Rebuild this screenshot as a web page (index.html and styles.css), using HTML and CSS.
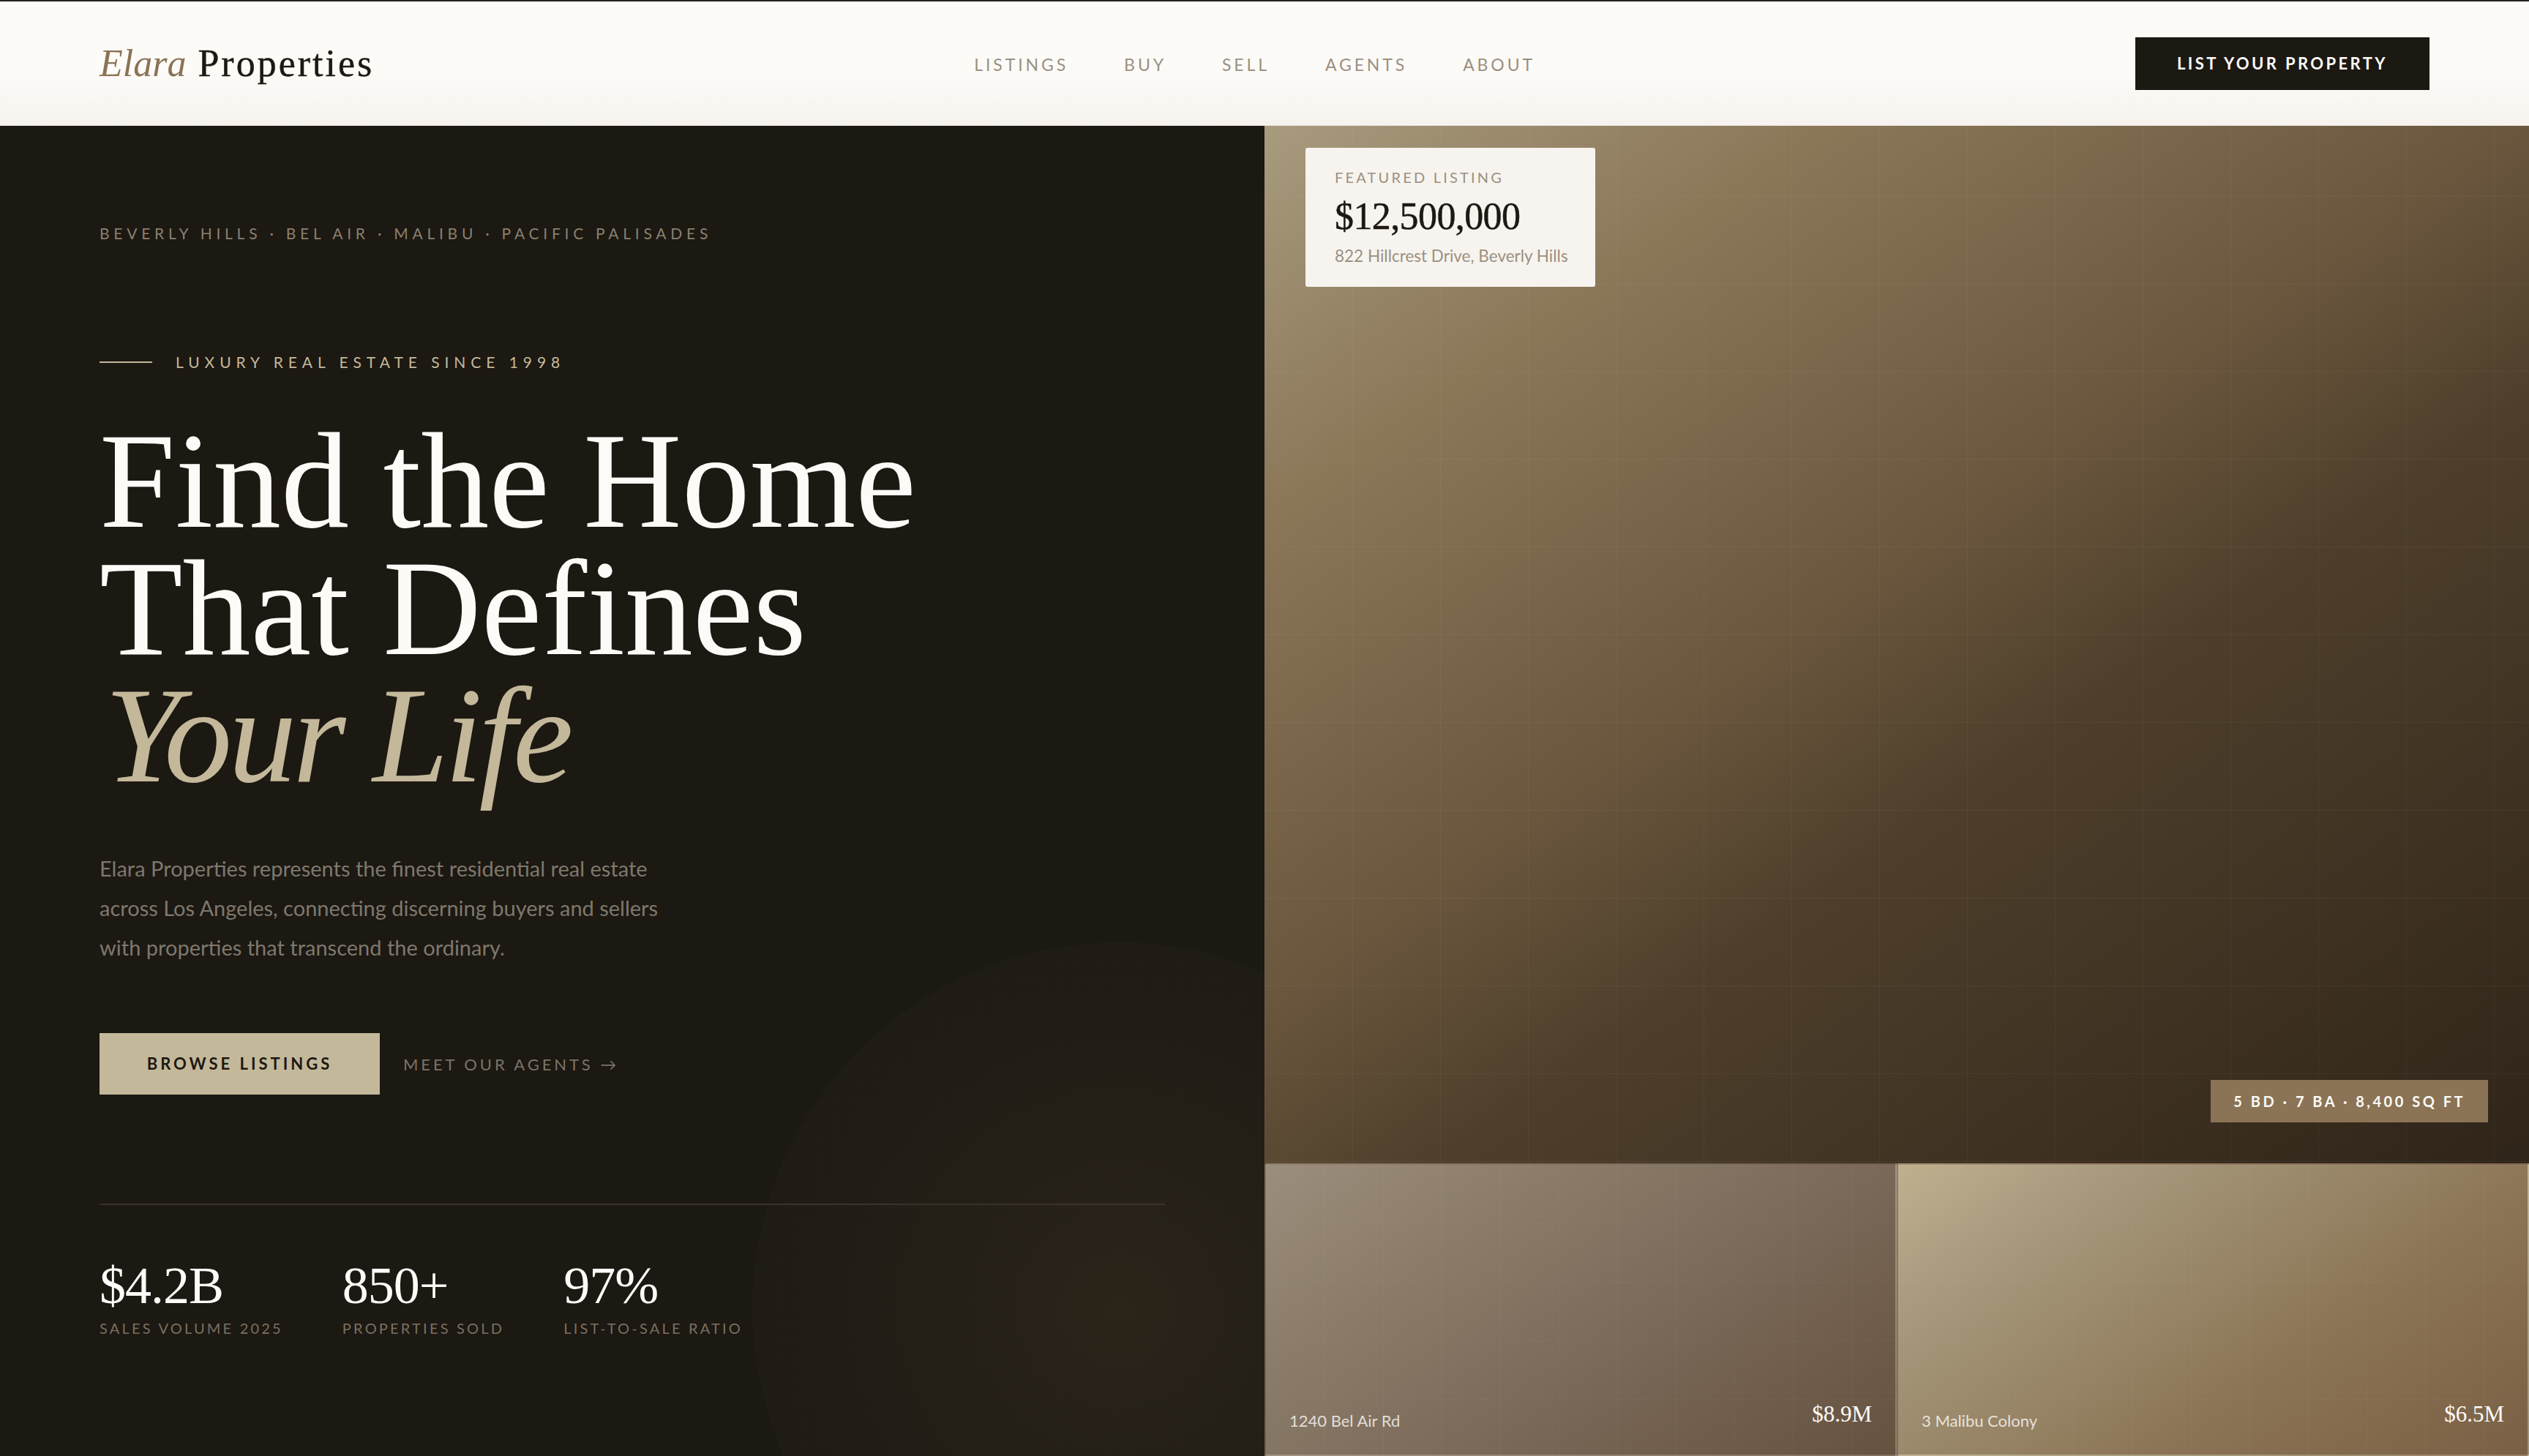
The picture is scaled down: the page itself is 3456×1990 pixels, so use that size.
FILE: index.html
```html
<!DOCTYPE html>
<html>
	<head>
		<meta charset="UTF-8">
		<title>Elara Properties</title>
		<link rel="stylesheet" href="styles.css">
	</head>
	<body>
		<div class="nav">
			<a class="logo" href="#"><em>Elara</em> Properties</a>
			<ul class="nav-links">
				<li><a href="#">Listings</a></li>
				<li><a href="#">Buy</a></li>
				<li><a href="#">Sell</a></li>
				<li><a href="#">Agents</a></li>
				<li><a href="#">About</a></li>
			</ul>
			<a class="nav-btn" href="#">List Your Property</a>
		</div>

		<div class="hero">
			<div class="hero-left">
				<div class="hero-circle"></div>
				<p class="areas">Beverly Hills · Bel Air · Malibu · Pacific Palisades</p>
				<div class="since"><span class="since-line"></span>Luxury Real Estate Since 1998</div>
				<h1 class="title">Find the Home<br>That Defines<br><em>Your Life</em></h1>
				<p class="intro">Elara Properties represents the finest residential real estate<br>across Los Angeles, connecting discerning buyers and sellers<br>with properties that transcend the ordinary.</p>
				<div class="actions">
					<a class="btn-browse" href="#">Browse Listings</a>
					<a class="btn-agents" href="#">Meet Our Agents →</a>
				</div>
				<div class="stats">
					<div class="stat">
						<div class="stat-num">$4.2B</div>
						<div class="stat-label">Sales Volume 2025</div>
					</div>
					<div class="stat">
						<div class="stat-num">850+</div>
						<div class="stat-label">Properties Sold</div>
					</div>
					<div class="stat">
						<div class="stat-num">97%</div>
						<div class="stat-label">List-to-Sale Ratio</div>
					</div>
				</div>
			</div>

			<div class="hero-right">
				<div class="main-photo">
					<div class="featured">
						<div class="featured-label">Featured Listing</div>
						<div class="featured-price">$12,500,000</div>
						<div class="featured-addr">822 Hillcrest Drive, Beverly Hills</div>
					</div>
					<div class="specs">5 BD · 7 BA · 8,400 SQ FT</div>
				</div>
				<div class="thumbs">
					<div class="thumb thumb-belair">
						<span class="thumb-name">1240 Bel Air Rd</span>
						<span class="thumb-price">$8.9M</span>
					</div>
					<div class="thumb thumb-malibu">
						<span class="thumb-name">3 Malibu Colony</span>
						<span class="thumb-price">$6.5M</span>
					</div>
				</div>
			</div>
		</div>
	</body>
</html>
```

FILE: styles.css
```css
* { box-sizing: border-box; margin: 0; padding: 0; }
html, body { height: 100%; }
body { display: flex; flex-direction: column; overflow: hidden; background: #1C1812; font-family: "Lato", "Open Sans", sans-serif; }
a { text-decoration: none; color: inherit; }
em { font-style: italic; }

/* nav */
.nav { display: flex; align-items: center; justify-content: space-between; flex: none; height: 172px; padding: 0 136px; border-top: 2px solid #222; border-bottom: 1px solid #E8E3DA; background: linear-gradient(180deg, #FDFBF8 55%, #F6F3EF 100%); }
.logo { font-family: "Liberation Serif", serif; font-size: 52px; letter-spacing: 3px; color: #1C1812; -webkit-text-stroke: .4px #1C1812; }
.logo em { letter-spacing: 0; color: #8B7355; -webkit-text-stroke: 0; }
.nav-links { display: flex; gap: 76px; margin-top: 3px; list-style: none; font-size: 23px; letter-spacing: 3.9px; text-transform: uppercase; color: #9A9080; }
.nav-btn { display: block; width: 402px; height: 72px; background: #1C1812; color: #FDFBF8; font-size: 22px; font-weight: 700; line-height: 72px; letter-spacing: 3.4px; text-align: center; text-transform: uppercase; }

/* hero */
.hero { flex: 1; display: grid; grid-template-columns: 1fr 1fr; min-height: 0; }
.hero-left { position: relative; overflow: hidden; padding: 133px 136px 0; background: #1C1812; }
.hero-left > * { position: relative; }
.hero-left > .hero-circle { position: absolute; right: -300px; bottom: -298px; width: 1000px; height: 1000px; border-radius: 50%; background: radial-gradient(circle closest-side, #2A2419 0%, #231E16 60%, #1F1B15 100%); }

.areas { font-size: 21px; line-height: 28px; letter-spacing: 5.75px; text-transform: uppercase; color: #8A8070; }
.since { display: flex; align-items: center; gap: 32px; margin-top: 148px; font-size: 21px; line-height: 28px; letter-spacing: 6.95px; text-transform: uppercase; color: #C4B89A; }
.since-line { width: 72px; height: 2px; background: #C4B89A; }

.title { margin-top: 61px; font-family: "Liberation Serif", serif; font-size: 186px; font-weight: 400; line-height: 174px; color: #FDFBF8; }
.title em { display: inline-block; margin-left: 7px; letter-spacing: -5px; color: #C4B89A; }

.intro { margin-top: 68px; font-size: 29px; line-height: 54px; color: #7E786D; }

.actions { display: flex; align-items: center; gap: 32px; margin-top: 90px; }
.btn-browse { display: block; width: 383px; height: 84px; background: #C4B89A; color: #1C1812; font-size: 22px; font-weight: 700; line-height: 84px; letter-spacing: 4px; text-align: center; text-transform: uppercase; }
.btn-agents { font-size: 22px; letter-spacing: 3.9px; text-transform: uppercase; color: #7A7468; }

.stats { display: flex; gap: 81px; margin-top: 149px; padding-top: 68px; border-top: 2px solid #38322A; }
.stat-num { font-family: "Liberation Serif", serif; font-size: 72px; line-height: 84px; letter-spacing: -1px; color: #FDFBF8; }
.stat-label { margin-top: 2px; font-size: 20px; line-height: 28px; letter-spacing: 3.2px; text-transform: uppercase; color: #7A705F; }

/* photos */
.hero-right { display: flex; flex-direction: column; min-height: 0; }
.main-photo { position: relative; flex: 1; background: linear-gradient(rgba(253,251,247,.04) 1px, transparent 1px) 0 95px / 120px 120px, linear-gradient(90deg, rgba(253,251,247,.04) 1px, transparent 1px) 0 0 / 120px 120px, linear-gradient(145deg, #A89B7E 0%, #8C7759 20%, #6A563D 46%, #4E3F2B 60%, #2F2419 100%); }

.featured { position: absolute; left: 56px; top: 30px; width: 396px; height: 190px; padding: 26px 40px 0; border-radius: 3px; background: #F7F4EF; }
.featured-label { font-size: 20px; line-height: 28px; letter-spacing: 3.2px; text-transform: uppercase; color: #9A9080; }
.featured-price { margin-top: 10px; font-family: "Liberation Serif", serif; font-size: 52px; line-height: 60px; letter-spacing: -.6px; color: #1C1812; -webkit-text-stroke: .5px #1C1812; }
.featured-addr { margin-top: 8px; font-size: 22.5px; line-height: 32px; white-space: nowrap; color: #9A9080; }

.specs { position: absolute; right: 56px; bottom: 56px; height: 58px; padding: 0 31px; background: #8B7355; color: #FDFBF8; font-size: 20px; font-weight: 700; line-height: 58px; letter-spacing: 3.5px; }

.thumbs { display: grid; grid-template-columns: 1fr 1fr; flex: none; height: 400px; }
.thumb { display: flex; align-items: flex-end; justify-content: space-between; padding: 0 32px 32px; border: 2px solid rgba(253,251,247,.06); }
.thumb-belair { background: linear-gradient(rgba(253,251,247,.03) 1px, transparent 1px) 0 0 / 80px 80px, linear-gradient(90deg, rgba(253,251,247,.03) 1px, transparent 1px) 0 0 / 80px 80px, linear-gradient(145deg, #9C8E7C 0%, #8A7B68 30%, #7A6858 60%, #65523F 100%); }
.thumb-malibu { background: linear-gradient(rgba(253,251,247,.03) 1px, transparent 1px) 0 0 / 80px 80px, linear-gradient(90deg, rgba(253,251,247,.03) 1px, transparent 1px) 0 0 / 80px 80px, linear-gradient(145deg, #BFB08F 0%, #A89B7E 20%, #8B7355 65%, #7A6044 100%); }
.thumb-name { font-size: 22px; line-height: 28px; color: rgba(253,251,247,.8); }
.thumb-price { margin-bottom: 5px; font-family: "Liberation Serif", serif; font-size: 31px; line-height: 36px; color: #FDFBF8; }
```
